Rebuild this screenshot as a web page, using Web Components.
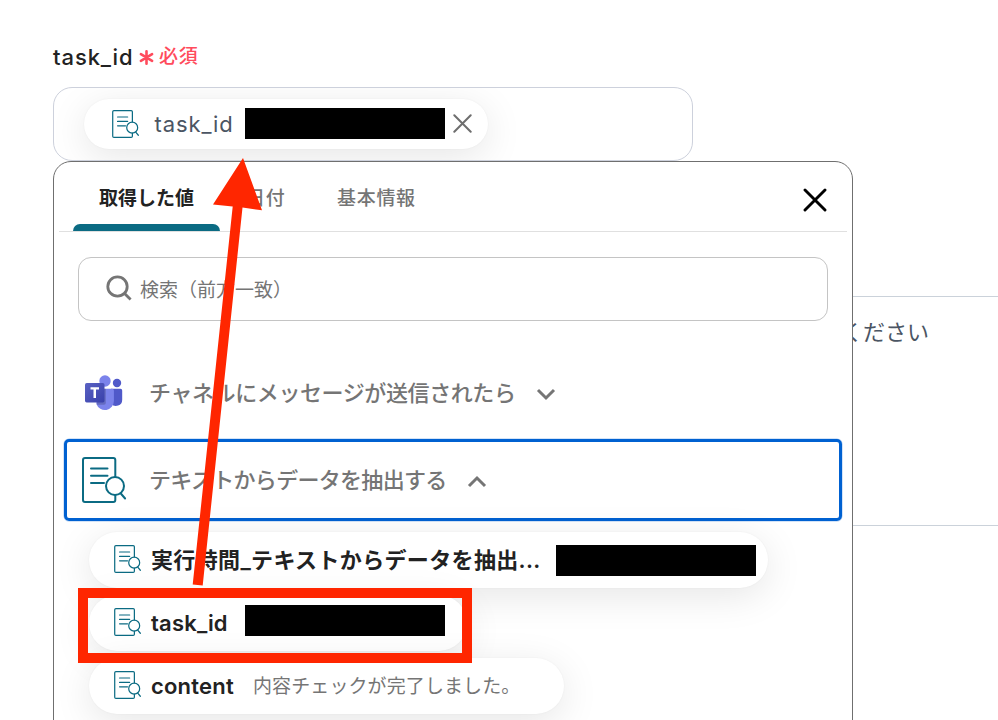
<!DOCTYPE html>
<html lang="ja">
<head>
<meta charset="utf-8">
<title>task_id</title>
<style>
    html, body{ margin: 0; background: #fff; }
    body{
        width: 998px; height: 720px; overflow: hidden;
        font-family: "Inter", "Noto Sans CJK JP", sans-serif;
    }
</style>
</head>
<body>
<field-page></field-page>

<script>
class docIcon extends HTMLElement {
    constructor() {
        super();
        this.attachShadow({ mode: 'open' });
        this.shadowRoot.innerHTML = `
            <style>
                :host{ display: block; flex: none; width: 27px; height: 28px; }
                svg{ display: block; width: 100%; height: 100%; overflow: visible; }
            </style>
            <svg viewBox="0 0 44 46" fill="none" stroke="#0b6b83" stroke-width="2" stroke-linecap="round">
                <path d="M33.3 19.5V3a2 2 0 0 0-2-2H3a2 2 0 0 0-2 2v40a2 2 0 0 0 2 2h28.300a2 2 0 0 0 2-2v-5"/>
                <path d="M9 11.500h16.500M9 18.800h16.500M9 26h13"/>
                <circle cx="33" cy="29" r="9"/>
                <path d="M38.800 36.500l4.300 5"/>
            </svg>
        `;
    }
}
customElements.define('doc-icon', docIcon);

class teamsIcon extends HTMLElement {
    constructor() {
        super();
        this.attachShadow({ mode: 'open' });
        this.shadowRoot.innerHTML = `
            <style>
                :host{ display: block; flex: none; width: 38px; height: 36px; }
                svg{ display: block; }
            </style>
            <svg width="38" height="36" viewBox="0 0 38 36">
                <defs>
                    <linearGradient id="g" x1="0" y1="0" x2="1" y2="1">
                        <stop offset="0" stop-color="#5a62c3"/>
                        <stop offset="1" stop-color="#3940ab"/>
                    </linearGradient>
                </defs>
                <circle cx="32" cy="8" r="4.200" fill="#5059c9"/>
                <path d="M26 13.800h9.500a1.700 1.700 0 0 1 1.700 1.700v9.200a6.200 6.200 0 0 1-11 4z" fill="#5059c9"/>
                <circle cx="20" cy="6" r="5.700" fill="#7b83eb"/>
                <path d="M12 13.800h15.200a1.700 1.700 0 0 1 1.700 1.700v10.500a9 9 0 0 1-17.500 3z" fill="#7b83eb"/>
                <path d="M12 13.800h8.800v14.200a1.800 1.800 0 0 1-1.800 1.800h-7.300z" fill="#000" opacity=".18"/>
                <rect x="0" y="8" width="19.500" height="19.500" rx="1.700" fill="url(#g)"/>
                <path d="M5.500 12.300h8.500v2.200h-3v8.500h-2.500v-8.500h-3z" fill="#fff"/>
            </svg>
        `;
    }
}
customElements.define('teams-icon', teamsIcon);

/* rounded value chip: icon, name, then whatever is slotted */
class valueChip extends HTMLElement {
    constructor() {
        super();
        this.attachShadow({ mode: 'open' });
        this.shadowRoot.innerHTML = `
            <style>
                :host{
                    display: flex; align-items: center; box-sizing: border-box;
                    width: max-content; height: 56px;
                    padding: 0 12px 0 24.500px;
                    border-radius: 28px; background: #fff;
                    box-shadow: 0 8px 38px rgba(0,0,0,.10), 0 0 2px rgba(0,0,0,.05);
                    white-space: nowrap;
                }
                doc-icon{ margin-bottom: 2px; }
                .name{
                    margin-left: 10.500px; color: #222; font-weight: 600;
                    font-size: 22px; line-height: 30px;
                }
                :host([token]){ height: 50px; padding: 0 16px 0 28px; }
                :host([token]) doc-icon{ margin-bottom: 0; }
                :host([token]) .name{
                    margin: 0 0 0 15.500px; color: #4b5563; font-weight: 400;
                    font-size: 22px; letter-spacing: .9px;
                }
            </style>
            <doc-icon></doc-icon>
            <span class="name"></span>
            <slot></slot>
        `;
    }
    connectedCallback() {
        const name = this.shadowRoot.querySelector('.name');
        name.textContent = this.getAttribute('name');
        name.style.width = this.getAttribute('name-width') || '';
        name.style.letterSpacing = this.getAttribute('spacing') || '';
    }
}
customElements.define('value-chip', valueChip);

class maskBox extends HTMLElement {
    constructor() {
        super();
        this.attachShadow({ mode: 'open' });
        this.shadowRoot.innerHTML = `
            <style>
                :host{ display: block; flex: none; width: 200px; height: 31px; background: #000; }
            </style>
        `;
    }
}
customElements.define('mask-box', maskBox);

class stepRow extends HTMLElement {
    constructor() {
        super();
        this.attachShadow({ mode: 'open' });
        this.shadowRoot.innerHTML = `
            <style>
                :host{
                    display: flex; align-items: center; box-sizing: border-box;
                    height: 82px; padding-left: 16px; margin: 0 10px;
                    border: 3px solid transparent; border-radius: 5px;
                }
                :host([open]){ border-color: #0061d1; box-shadow: 0 0 0 .5px #a8c8f0; }
                .icon{ display: flex; width: 66px; }
                .label{
                    color: #757575; font-size: 22px; font-weight: 500;
                    line-height: 30px; white-space: nowrap;
                }
                svg{ margin: 2px 0 0 21px; }
                :host([open]) svg{ transform: rotate(180deg); margin-top: 3px; }
            </style>
            <div class="icon"><slot name="icon"></slot></div>
            <span class="label"></span>
            <svg width="20" height="14" viewBox="0 0 20 14" fill="none" stroke="#757575" stroke-width="3">
                <path d="M2 3l8 8 8-8"/>
            </svg>
        `;
    }
    connectedCallback() {
        const label = this.shadowRoot.querySelector('.label');
        label.textContent = this.getAttribute('label');
        label.style.width = this.getAttribute('label-width') || '';
        label.style.letterSpacing = this.getAttribute('spacing') || '';
    }
}
customElements.define('step-row', stepRow);

class tabBar extends HTMLElement {
    constructor() {
        super();
        this.attachShadow({ mode: 'open' });
        this.shadowRoot.innerHTML = `
            <style>
                :host{
                    display: flex; box-sizing: border-box; height: 70px;
                    margin: 0 5px; padding: 0 20px 0 14px;
                    border-bottom: 1px solid #e0e0e0;
                }
                .tab{
                    display: flex; flex-direction: column; justify-content: space-between;
                    box-sizing: border-box; padding: 23px 0 0 26px; height: 69px;
                    color: #757575; font-size: 19px; font-weight: 500; line-height: 28px;
                    letter-spacing: .7px;
                    white-space: nowrap;
                }
                .tab.active{ width: 147px; color: #222; font-weight: 600; letter-spacing: 0; }
                .tab.active::after{
                    content: ""; height: 7px; margin-left: -26px;
                    background: #0b6b83; border-radius: 7px 7px 0 0;
                }
                .date{ width: 91px; }
                svg{ margin: 26px 0 0 auto; }
            </style>
            <div class="tab active">取得した値</div>
            <div class="tab date">日付</div>
            <div class="tab">基本情報</div>
            <svg width="24" height="24" viewBox="0 0 24 24" stroke="#000" stroke-width="2.900" stroke-linecap="round">
                <path d="M2 2l20 20M22 2L2 22"/>
            </svg>
        `;
    }
}
customElements.define('tab-bar', tabBar);

class searchBox extends HTMLElement {
    constructor() {
        super();
        this.attachShadow({ mode: 'open' });
        this.shadowRoot.innerHTML = `
            <style>
                :host{
                    display: flex; align-items: center; box-sizing: border-box;
                    height: 64px; margin: 25px 24px 31px; padding-left: 27px;
                    border: 1px solid #c4c4c4; border-radius: 13px;
                    color: #757575; font-size: 19px; line-height: 28px;
                }
                svg{ margin: 0 8px 2px 0; }
                span{ margin-top: 4px; }
            </style>
            <svg width="26" height="26" viewBox="0 0 26 26" fill="none" stroke="#757575" stroke-width="2.800">
                <circle cx="11.500" cy="11.500" r="9.700"/>
                <path d="M18.300 18.300l6.300 6.300"/>
            </svg>
            <span>検索（前方一致）</span>
        `;
    }
}
customElements.define('search-box', searchBox);

class valuePicker extends HTMLElement {
    constructor() {
        super();
        this.attachShadow({ mode: 'open' });
        this.shadowRoot.innerHTML = `
            <style>
                :host{
                    display: block; box-sizing: border-box; overflow: hidden;
                    width: 800px; height: 600px;
                    border: 1px solid #6f6f6f; border-radius: 18px; background: #fff;
                }
                .values{
                    display: flex; flex-direction: column; gap: 7px;
                    padding: 11px 0 0 35px;
                }
                .big{ width: 44px; height: 46px; margin-left: -1px; }
                .teams{ margin-left: 2px; }
                .text{ margin: 1px 0 0 19px; width: 299px; color: #757575; font-size: 19px; line-height: 28px; letter-spacing: .1px; }
            </style>
            <tab-bar></tab-bar>
            <search-box></search-box>
            <step-row label="チャネルにメッセージが送信されたら" label-width="366px" spacing="-.4px">
                <teams-icon class="teams" slot="icon"></teams-icon>
            </step-row>
            <step-row open style="margin-top: 5px" label="テキストからデータを抽出する" label-width="297px" spacing="-.7px">
                <doc-icon class="big" slot="icon"></doc-icon>
            </step-row>
            <div class="values">
                <value-chip name="実行時間_テキストからデータを抽出..." name-width="405px" spacing=".35px"><mask-box></mask-box></value-chip>
                <value-chip name="task_id" name-width="94px" spacing=".2px"><mask-box style="margin-bottom: 5px; margin-right: 10px"></mask-box></value-chip>
                <value-chip name="content" name-width="83px" spacing=".2px"><span class="text">内容チェックが完了しました。</span></value-chip>
            </div>
        `;
    }
}
customElements.define('value-picker', valuePicker);

class fieldPage extends HTMLElement {
    constructor() {
        super();
        this.attachShadow({ mode: 'open' });
        this.shadowRoot.innerHTML = `
            <style>
                :host{
                    display: block; position: relative; box-sizing: border-box;
                    width: 998px; height: 720px; padding-top: 42px; overflow: hidden;
                }
                .label{
                    display: flex; align-items: center; height: 30px; padding-left: 53px;
                    font-size: 22px; font-weight: 500; color: #222; letter-spacing: .9px;
                }
                .name{ width: 85.500px; }
                .must{ margin: -5px 0 0 5.500px; color: #ff4b5c; font-size: 19px; font-weight: 500; letter-spacing: .8px; }
                .input{
                    display: flex; align-items: center; box-sizing: border-box;
                    width: 640px; height: 74px; margin: 15px 0 0 53px; padding: 0 0 1px 30px;
                    border: 1px solid #cdd1dc; border-radius: 19px; overflow: hidden;
                }
                .clear{ margin: 0 0 1px 8px; }
                .section{
                    box-sizing: border-box; height: 230px; margin: 135px 0 0 800px;
                    padding: 20px 69px 0 0; text-align: right;
                    border: 1px solid #cbd2da; border-width: 1px 0;
                    color: #4b5563; font-size: 22px; line-height: 30px;
                }
                /* dropdown over the form */
                .picker{ position: absolute; left: 53px; top: 161px; }
                .marks{ position: absolute; left: 0; top: 0; }
            </style>
            <div class="label">
                <span class="name">task_id</span>
                <svg width="15" height="15" viewBox="0 0 15 15" stroke="#ff4b5c" stroke-width="2.600" stroke-linecap="round">
                    <path d="M7.500 1.300v12.400M1.900 4.200l11.200 6.600M13.100 4.200L1.900 10.800"/>
                </svg>
                <span class="must">必須</span>
            </div>
            <div class="input">
                <value-chip token name="task_id" name-width="90.500px">
                    <mask-box style="margin-bottom: 1px"></mask-box>
                    <svg class="clear" width="19" height="19" viewBox="0 0 19 19" stroke="#6e6e6e" stroke-width="2" stroke-linecap="round">
                        <path d="M1.300 1.300l16.400 16.400M17.700 1.300L1.300 17.700"/>
                    </svg>
                </value-chip>
            </div>
            <div class="section">ください</div>
            <value-picker class="picker"></value-picker>
            <svg class="marks" width="998" height="720" fill="#ff2600">
                <path d="M243 158l19 52.300-19.500-2.700L202.700 585.500l-10-1L232.700 206.500l-19.700-2z"/>
                <rect x="83" y="593" width="384" height="65" fill="none" stroke="#ff2600" stroke-width="10"/>
            </svg>
        `;
    }
}
customElements.define('field-page', fieldPage);
</script>
</body>
</html>
